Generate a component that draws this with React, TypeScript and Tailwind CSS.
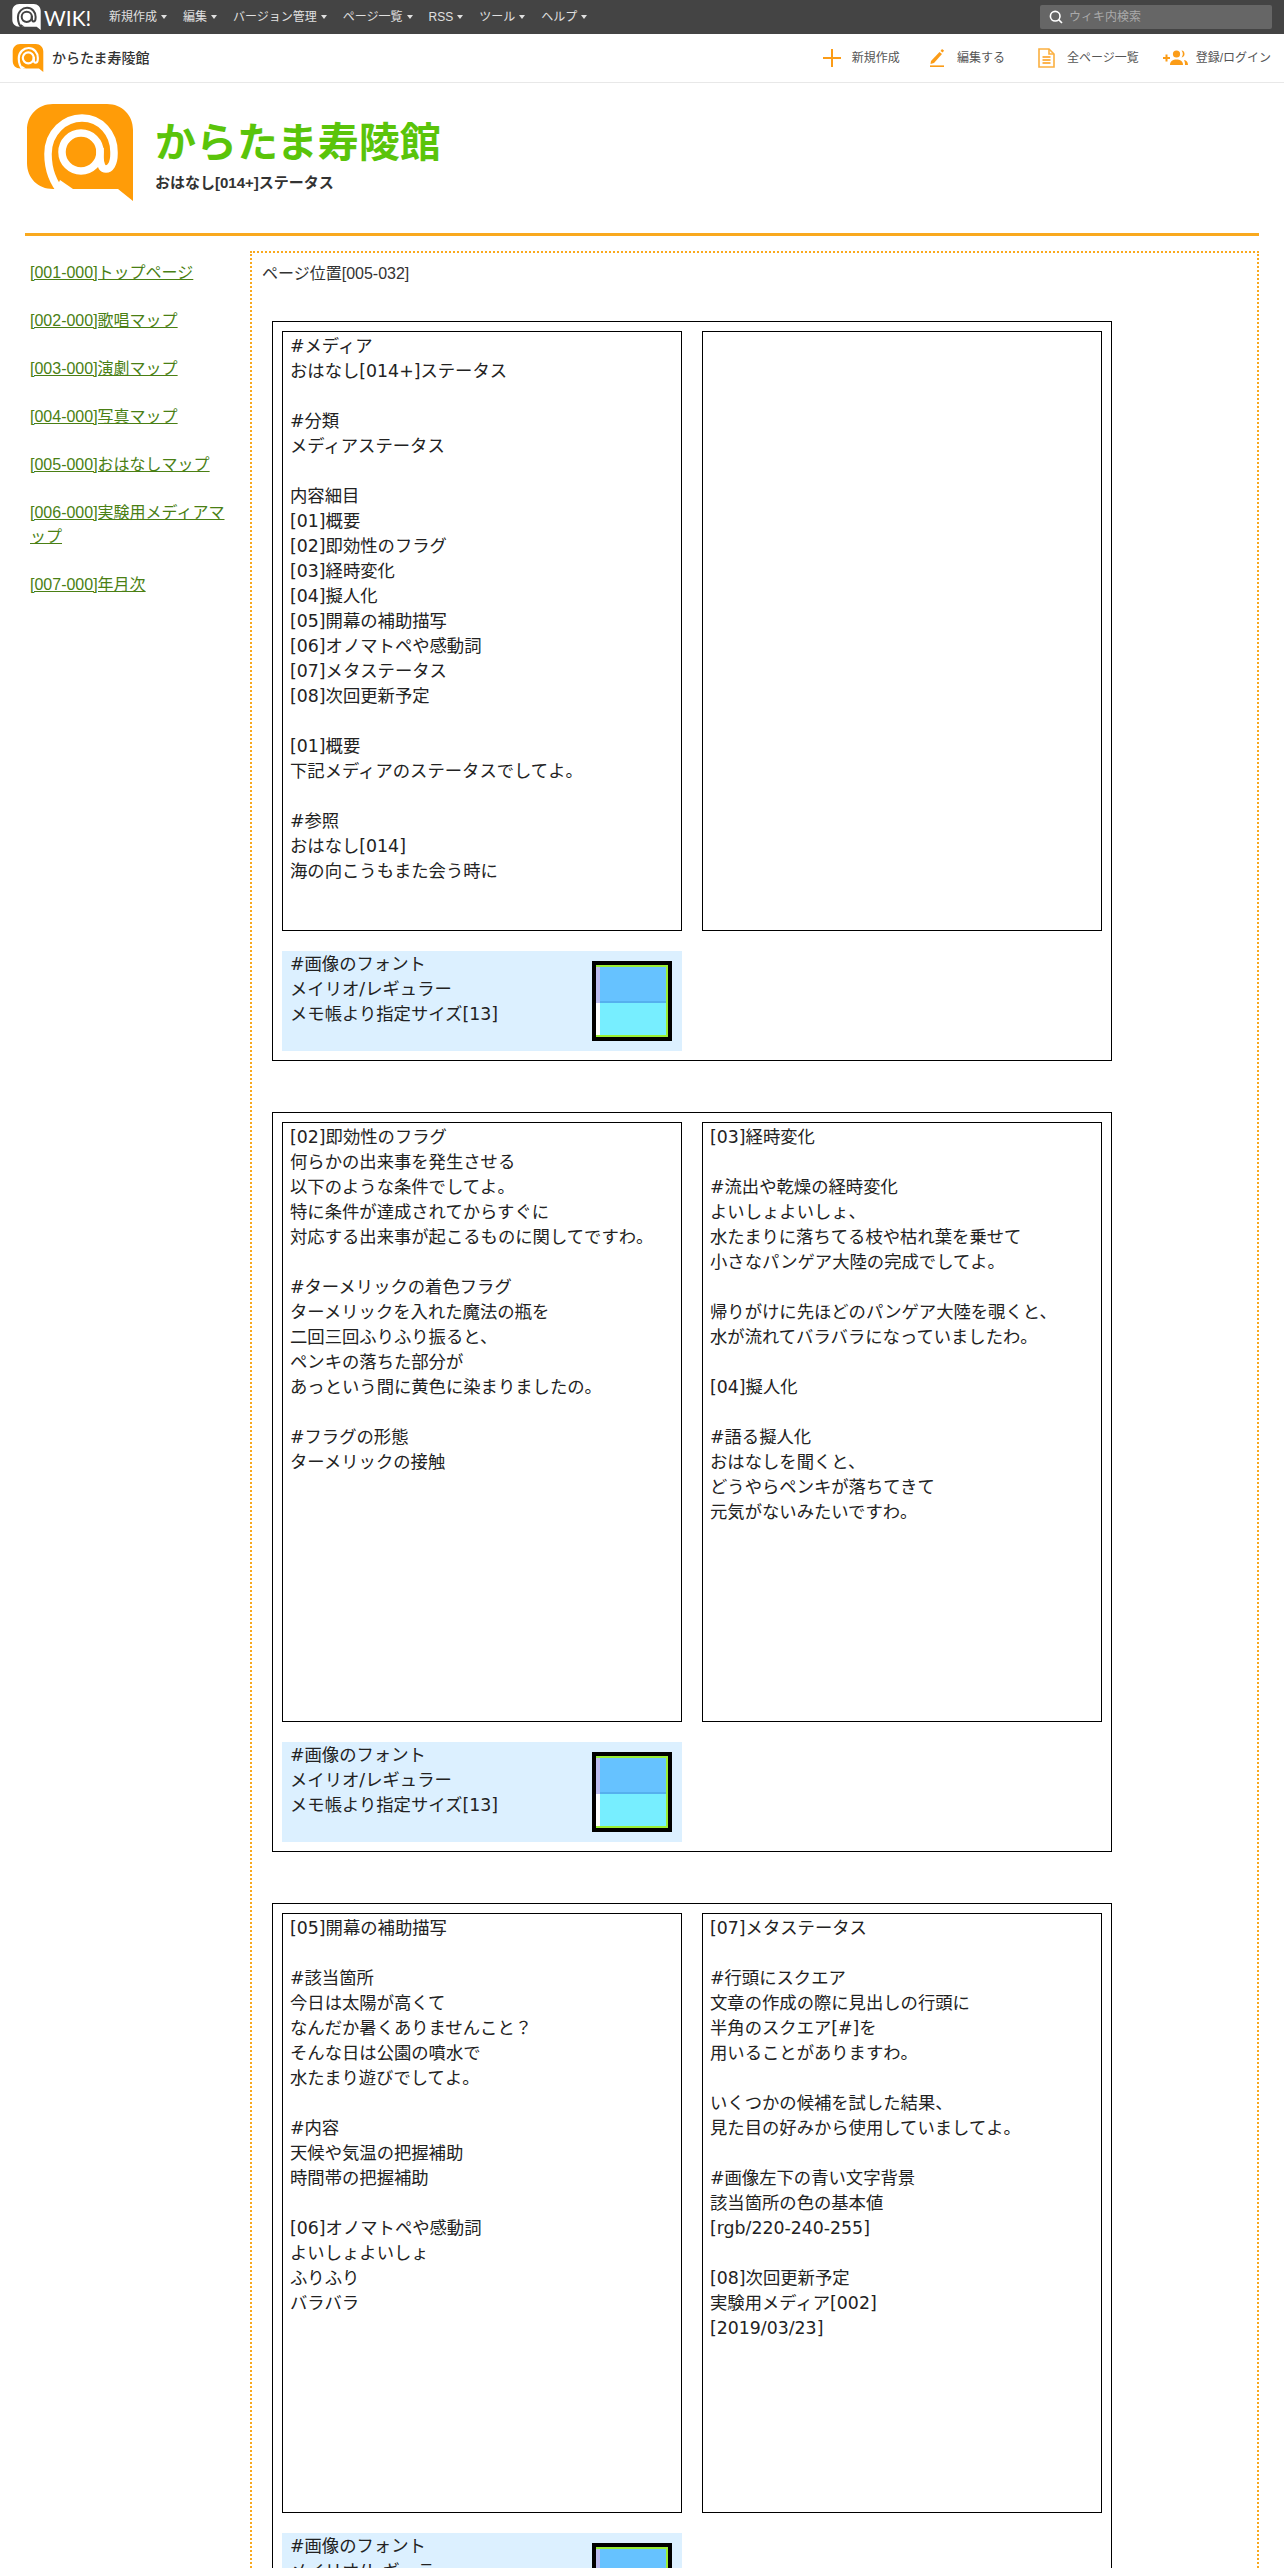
import React from "react";

type Section = { left: string; right: string };

const sections: Section[] = [
  {
    left: `#メディア
おはなし[014+]ステータス

#分類
メディアステータス

内容細目
[01]概要
[02]即効性のフラグ
[03]経時変化
[04]擬人化
[05]開幕の補助描写
[06]オノマトペや感動詞
[07]メタステータス
[08]次回更新予定

[01]概要
下記メディアのステータスでしてよ。

#参照
おはなし[014]
海の向こうもまた会う時に`,
    right: "",
  },
  {
    left: `[02]即効性のフラグ
何らかの出来事を発生させる
以下のような条件でしてよ。
特に条件が達成されてからすぐに
対応する出来事が起こるものに関してですわ。

#ターメリックの着色フラグ
ターメリックを入れた魔法の瓶を
二回三回ふりふり振ると、
ペンキの落ちた部分が
あっという間に黄色に染まりましたの。

#フラグの形態
ターメリックの接触`,
    right: `[03]経時変化

#流出や乾燥の経時変化
よいしょよいしょ、
水たまりに落ちてる枝や枯れ葉を乗せて
小さなパンゲア大陸の完成でしてよ。

帰りがけに先ほどのパンゲア大陸を覗くと、
水が流れてバラバラになっていましたわ。

[04]擬人化

#語る擬人化
おはなしを聞くと、
どうやらペンキが落ちてきて
元気がないみたいですわ。`,
  },
  {
    left: `[05]開幕の補助描写

#該当箇所
今日は太陽が高くて
なんだか暑くありませんこと？
そんな日は公園の噴水で
水たまり遊びでしてよ。

#内容
天候や気温の把握補助
時間帯の把握補助

[06]オノマトペや感動詞
よいしょよいしょ
ふりふり
バラバラ`,
    right: `[07]メタステータス

#行頭にスクエア
文章の作成の際に見出しの行頭に
半角のスクエア[#]を
用いることがありますわ。

いくつかの候補を試した結果、
見た目の好みから使用していましてよ。

#画像左下の青い文字背景
該当箇所の色の基本値
[rgb/220-240-255]

[08]次回更新予定
実験用メディア[002]
[2019/03/23]`,
  },
];

const sideLinks = [
  "[001-000]トップページ",
  "[002-000]歌唱マップ",
  "[003-000]演劇マップ",
  "[004-000]写真マップ",
  "[005-000]おはなしマップ",
  "[006-000]実験用メディアマップ",
  "[007-000]年月次",
];

const navItems = ["新規作成", "編集", "バージョン管理", "ページ一覧", "RSS", "ツール", "ヘルプ"];

// the @wiki speech bubble, drawn in a 106x97 box
function AtLogo({ bubble, mark, className }: { bubble: string; mark: string; className: string }) {
  return (
    <svg viewBox="0 0 106 97" className={className}>
      <path
        d="M26 0H80C95 0 106 11 106 26V97L91 85H26C11 85 0 74 0 59V26C0 11 11 0 26 0Z"
        fill={bubble}
      />
      <g fill="none" stroke={mark} strokeWidth="7.5">
        <circle cx="54" cy="48" r="19" />
        <path d="M36 90C26 79 21 64 21 50C21 28 38 14 55 14C74 14 87 30 87 48V50C87 60 83 65 79 65C75 65 73 60 73 52V44" />
      </g>
      <path d="M29 85L33 76L46 85Z" fill={mark} />
    </svg>
  );
}

function Thumb() {
  return (
    <div className="w-[80px] h-[80px] border-[4px] border-black shrink-0">
      <div className="w-full h-full flex flex-col border-t-[2px] border-r-[2px] border-b-[2px] border-[#99ee33]">
        <div className="flex h-[36px]">
          <div className="w-[4px] bg-[#bbbbee]" />
          <div className="flex-1 bg-[#66c2ff] border-b-[2px] border-[#55b0ee]" />
        </div>
        <div className="flex flex-1">
          <div className="w-[4px] bg-white" />
          <div className="flex-1 bg-[#77eeff]" />
        </div>
      </div>
    </div>
  );
}

function TextBox({ text }: { text: string }) {
  return (
    <div className="w-[400px] h-[600px] border border-black pl-[7px] pt-[2px] font-['DejaVu_Sans','Noto_Sans_CJK_JP',sans-serif] text-[17.33px] leading-[25px] text-[#222] whitespace-pre-line">
      {text}
    </div>
  );
}

function SectionBlock({ section }: { section: Section }) {
  return (
    <div className="w-[840px] h-[740px] border border-black pt-[9px] pl-[9px] mb-[51px]">
      <div className="flex gap-[20px]">
        <TextBox text={section.left} />
        <TextBox text={section.right} />
      </div>
      <div className="w-[400px] h-[100px] mt-[20px] bg-[#dcf0ff] pl-[8px] pr-[10px] flex items-center justify-between font-['DejaVu_Sans','Noto_Sans_CJK_JP',sans-serif] text-[17.33px] leading-[25px] text-[#222]">
        <div className="self-start pt-[1px] whitespace-pre-line">
          {"#画像のフォント\nメイリオ/レギュラー\nメモ帳より指定サイズ[13]"}
        </div>
        <Thumb />
      </div>
    </div>
  );
}

export default function App() {
  return (
    <div className="h-[2568px] overflow-hidden bg-white font-['Liberation_Sans','Noto_Sans_CJK_JP',sans-serif]">
      {/* top bar */}
      <div className="h-[34px] bg-[#444444] flex items-center pl-[12px] pr-[12px]">
        <AtLogo bubble="#ffffff" mark="#444444" className="w-[29px] h-[26px]" />
        <span className="ml-[3px] w-[50px] text-[21px] leading-none text-white font-['Lato',sans-serif] font-normal">
          WIK!
        </span>
        <div className="flex ml-[15px]">
          {navItems.map((item) => (
            <div key={item} className="flex items-center mr-[16px] text-[12px] text-[#e0e0e0]">
              {item}
              <span className="ml-[4px] w-0 h-0 border-x-[3px] border-t-[4px] border-x-transparent border-t-[#e0e0e0]" />
            </div>
          ))}
        </div>
        <div className="ml-auto w-[232px] h-[24px] bg-[#666666] rounded-[2px] flex items-center pl-[9px] text-[12px] text-[#aaaaaa]">
          <svg viewBox="0 0 14 14" className="w-[14px] h-[14px] mr-[6px]" fill="none" stroke="#ffffff" strokeWidth="1.6">
            <circle cx="6.2" cy="6.2" r="4.8" />
            <path d="M9.6 9.6L13 13" />
          </svg>
          ウィキ内検索
        </div>
      </div>

      {/* site bar */}
      <div className="h-[49px] border-b border-[#e8e8e8] flex items-center pl-[12px] pr-[13px] text-[12px] text-[#555555]">
        <AtLogo bubble="#ff9c08" mark="#ffffff" className="w-[32px] h-[28px]" />
        <span className="ml-[8px] text-[14px] font-medium text-[#333333]">からたま寿陵館</span>
        <div className="ml-auto flex items-center">
          <svg viewBox="0 0 18 18" className="w-[18px] h-[18px] mr-[11px]" fill="none" stroke="#fb9c17" strokeWidth="2">
            <path d="M9 0V18M0 9H18" />
          </svg>
          <span>新規作成</span>
          <svg viewBox="0 0 14 18" className="w-[14px] h-[18px] ml-[30px] mr-[13px]" fill="#fb9c17">
            <path d="M1 12L9.5 3L12 5L4 14L0.5 15Z" />
            <path d="M10.5 2L12 0L14 1.5L12.8 3.6Z" />
            <rect x="0" y="16.4" width="14" height="1.6" />
          </svg>
          <span>編集する</span>
          <svg viewBox="0 0 17 20" className="w-[17px] h-[20px] ml-[33px] mr-[12px]" fill="none" stroke="#fbb040" strokeWidth="1.6">
            <path d="M1 1H11L16 6V19H1Z" />
            <path d="M11 1V6H16" />
            <path d="M4.5 9H12.5M4.5 12H12.5M4.5 15H12.5" stroke="#fb9c17" />
          </svg>
          <span>全ページ一覧</span>
          <svg viewBox="0 0 25 16" className="w-[25px] h-[16px] ml-[24px] mr-[8px]" fill="#fb9c17">
            <rect x="0" y="7" width="7" height="2" />
            <rect x="2.5" y="4.5" width="2" height="7" />
            <circle cx="13.5" cy="4" r="3.6" />
            <path d="M7 15C7 11 10 9.5 13.5 9.5C17 9.5 20 11 20 15Z" />
            <path d="M18.5 0.6C20.5 0.8 21.5 2.2 21.5 4C21.5 5.8 20.5 7 18.5 7.4C19.5 6 19.8 5 19.8 4C19.8 3 19.5 1.8 18.5 0.6Z" />
            <path d="M21 10C23.5 10.5 25 12 25 15H22C22 13 21.8 11.5 21 10Z" />
          </svg>
          <span>登録/ログイン</span>
        </div>
      </div>

      {/* title */}
      <div className="h-[150px] pl-[27px] pt-[21px] flex">
        <AtLogo bubble="#ff9c08" mark="#ffffff" className="w-[106px] h-[97px] shrink-0" />
        <div className="ml-[22px] mt-[15px]">
          <div className="text-[41px] leading-[48px] font-bold text-[#5ac40a]">からたま寿陵館</div>
          <div className="mt-[6px] text-[15px] leading-[20px] font-bold text-[#333333]">おはなし[014+]ステータス</div>
        </div>
      </div>

      {/* body */}
      <div className="ml-[25px] w-[1234px] border-t-[3px] border-[#f9a91e] pt-[15px] flex">
        <ul className="w-[225px] shrink-0 pl-[5px] pr-[15px] pt-[10px] text-[16px] leading-[24px] text-[#4a7f14]">
          {sideLinks.map((link) => (
            <li key={link} className="mb-[24px]">
              <a className="underline">{link}</a>
            </li>
          ))}
        </ul>
        <div className="flex-1 border-2 border-dotted border-[#f9a91e] pl-[20px] pt-[9px]">
          <div className="-ml-[10px] mb-[35px] text-[16px] leading-[24px] text-[#333333]">ページ位置[005-032]</div>
          {sections.map((section, i) => (
            <SectionBlock key={i} section={section} />
          ))}
        </div>
      </div>
    </div>
  );
}
